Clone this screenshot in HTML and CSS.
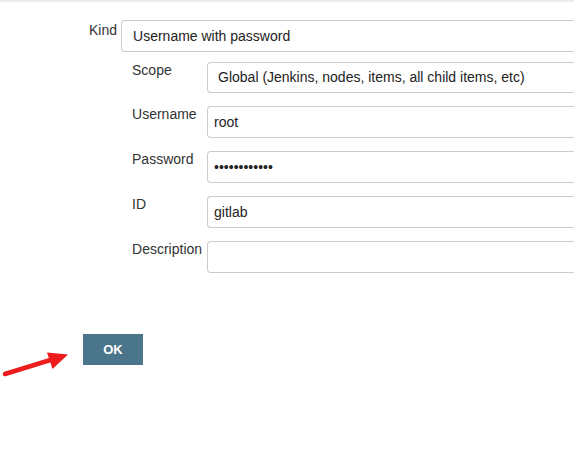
FILE: index.html
```html
<!DOCTYPE html>
<html>
<head>
<meta charset="utf-8">
<link rel="stylesheet" href="styles.css">
</head>
<body>
<div class="page">
  <div class="form">
    <div class="kind-row">
      <label class="kind-label">Kind</label>
      <div class="kind-field">
        <div class="select kind-select">Username with password</div>
        <div class="sub">
          <label class="sub-label">Scope</label>
          <div class="select scope-select">Global (Jenkins, nodes, items, all child items, etc)</div>
          <label class="sub-label">Username</label>
          <input class="input" type="text" value="root">
          <label class="sub-label">Password</label>
          <input class="input" type="password" value="rootpassword">
          <label class="sub-label">ID</label>
          <input class="input" type="text" value="gitlab">
          <label class="sub-label">Description</label>
          <input class="input" type="text" value="">
        </div>
      </div>
    </div>
  </div>
  <div class="actions">
    <button class="ok-btn" type="button">OK</button>
  </div>
  <svg class="arrow" width="80" height="40" viewBox="0 340 80 40" aria-hidden="true">
    <line x1="5" y1="374" x2="52" y2="359.5" stroke="#ee1c1c" stroke-width="4.5" stroke-linecap="round"/>
    <polygon points="68,354.5 47,352.5 52.5,369" fill="#ee1c1c"/>
  </svg>
</div>
</body>
</html>
```

FILE: styles.css
```css
html, body {
  margin: 0;
  padding: 0;
  overflow: hidden;
  background: #fff;
}

body {
  font-family: "Liberation Sans", Arial, sans-serif;
  font-size: 14px;
  line-height: 16px;
  color: #333;
}

.page {
  position: relative;
  height: 464px;
  border-top: 2px solid #ececec;
  box-sizing: border-box;
}

.form {
  padding: 18px 0 0 89px;
}

.kind-row {
  display: flex;
  align-items: flex-start;
  gap: 4px;
}

.kind-label {
  padding-top: 2px;
  color: #333;
}

.kind-field {
  flex: 1;
  min-width: 0;
}

.select,
.input {
  display: block;
  box-sizing: border-box;
  width: 100%;
  min-width: 0;
  height: 32px;
  border: 1px solid #ccc;
  border-right: 0;
  border-radius: 4px 0 0 4px;
  background: #fff;
  font-family: "Liberation Sans", Arial, sans-serif;
  font-size: 14px;
  color: #222;
  line-height: 30px;
  white-space: nowrap;
  overflow: hidden;
}

.kind-select {
  padding-left: 11px;
}

.scope-select {
  padding-left: 10px;
  height: 31px;
  line-height: 29px;
}

.input {
  padding: 0 6px;
  margin: 0;
  outline: none;
}

.sub {
  display: grid;
  grid-template-columns: 75px minmax(0, 1fr);
  row-gap: 13px;
  padding-left: 11px;
  margin-top: 10px;
}

.sub-label {
  color: #333;
  padding-top: 0;
}

.actions {
  padding: 61px 0 0 83px;
}

.ok-btn {
  display: block;
  width: 60px;
  height: 31px;
  border: none;
  border-radius: 0;
  background: #4b758b;
  color: #fff;
  font-family: "Liberation Sans", Arial, sans-serif;
  font-size: 13px;
  font-weight: bold;
  padding: 0;
}

.arrow {
  position: absolute;
  left: 0;
  top: 338px;
}
```
